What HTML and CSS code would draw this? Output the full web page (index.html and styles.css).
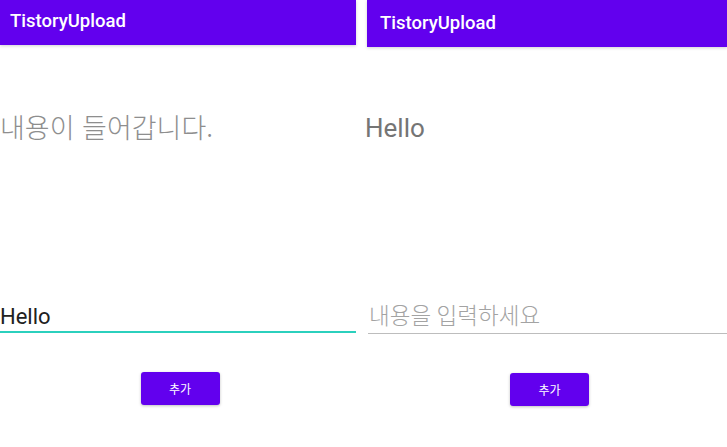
FILE: index.html
```html
<!DOCTYPE html>
<html lang="ko">
<head>
    <meta charset="UTF-8">
    <meta name="viewport" content="width=device-width, initial-scale=1.0">
    <title>TistoryUpload</title>
    <link rel="stylesheet" href="styles.css">
</head>
<body>
    <div id="screens">
        <div class="screen screen-left">
            <div class="appbar">TistoryUpload</div>
            <div class="display empty">내용이 들어갑니다.</div>
            <input class="field focused" type="text" value="Hello" placeholder="내용을 입력하세요">
            <div class="actions">
                <button class="add-btn">추가</button>
            </div>
        </div>
        <div class="screen screen-right">
            <div class="appbar">TistoryUpload</div>
            <div class="display">Hello</div>
            <input class="field" type="text" placeholder="내용을 입력하세요">
            <div class="actions">
                <button class="add-btn">추가</button>
            </div>
        </div>
    </div>
</body>
</html>
```

FILE: styles.css
```css
body {
    margin: 0;
    padding: 0;
    background-color: #ffffff;
    font-family: Roboto, "Noto Sans CJK KR", sans-serif;
}
#screens {
    display: flex;
    gap: 11px;
    height: 447px;
}
.screen {
    display: flex;
    flex-direction: column;
    background-color: #ffffff;
}
.screen-left {
    width: 356px;
}
.screen-right {
    width: 360px;
}
.appbar {
    background-color: #6200ee;
    color: #ffffff;
    font-size: 18.5px;
    font-weight: 500;
    padding-left: 10px;
    box-shadow: 0 1px 3px rgba(0, 0, 0, 0.18);
}
.screen-left .appbar {
    height: 45px;
    line-height: 42px;
}
.screen-right .appbar {
    height: 47px;
    line-height: 46px;
    padding-left: 13px;
}
.display {
    color: #757575;
    white-space: nowrap;
}
.display.empty {
    color: #8e8e8e;
    font-family: "Noto Sans CJK KR", sans-serif;
    font-weight: 300;
    font-size: 27px;
    line-height: 30px;
    margin-top: 67px;
}
.screen-right .display {
    font-size: 26px;
    line-height: 32px;
    margin-top: 65px;
    margin-left: -2px;
}
.field {
    display: block;
    box-sizing: border-box;
    width: 100%;
    height: 36px;
    margin: 0;
    padding: 0;
    border: none;
    outline: none;
    background: transparent;
    font-family: Roboto, "Noto Sans CJK KR", sans-serif;
    color: #212121;
}
.field::placeholder {
    color: #a3a3a3;
    font-weight: 300;
}
.screen-left .field {
    font-size: 22px;
    margin-top: 155px;
    padding-top: 4px;
    border-bottom: 2px solid #2bd0bd;
}
.screen-right .field {
    font-size: 22.5px;
    margin-top: 154px;
    margin-left: 1px;
    padding-left: 1px;
    padding-top: 1px;
    width: 359px;
    border-bottom: 1.5px solid #bdbdbd;
}
.actions {
    display: flex;
    justify-content: center;
    margin-top: 39px;
}
.screen-left .actions {
    padding-left: 4px;
}
.screen-right .actions {
    padding-left: 5px;
}
.add-btn {
    width: 79px;
    height: 33px;
    border: none;
    border-radius: 3px;
    background-color: #6200ee;
    color: #ffffff;
    font-family: "Noto Sans CJK KR", sans-serif;
    font-size: 12px;
    box-shadow: 0 1px 3px rgba(0, 0, 0, 0.25);
}
```
